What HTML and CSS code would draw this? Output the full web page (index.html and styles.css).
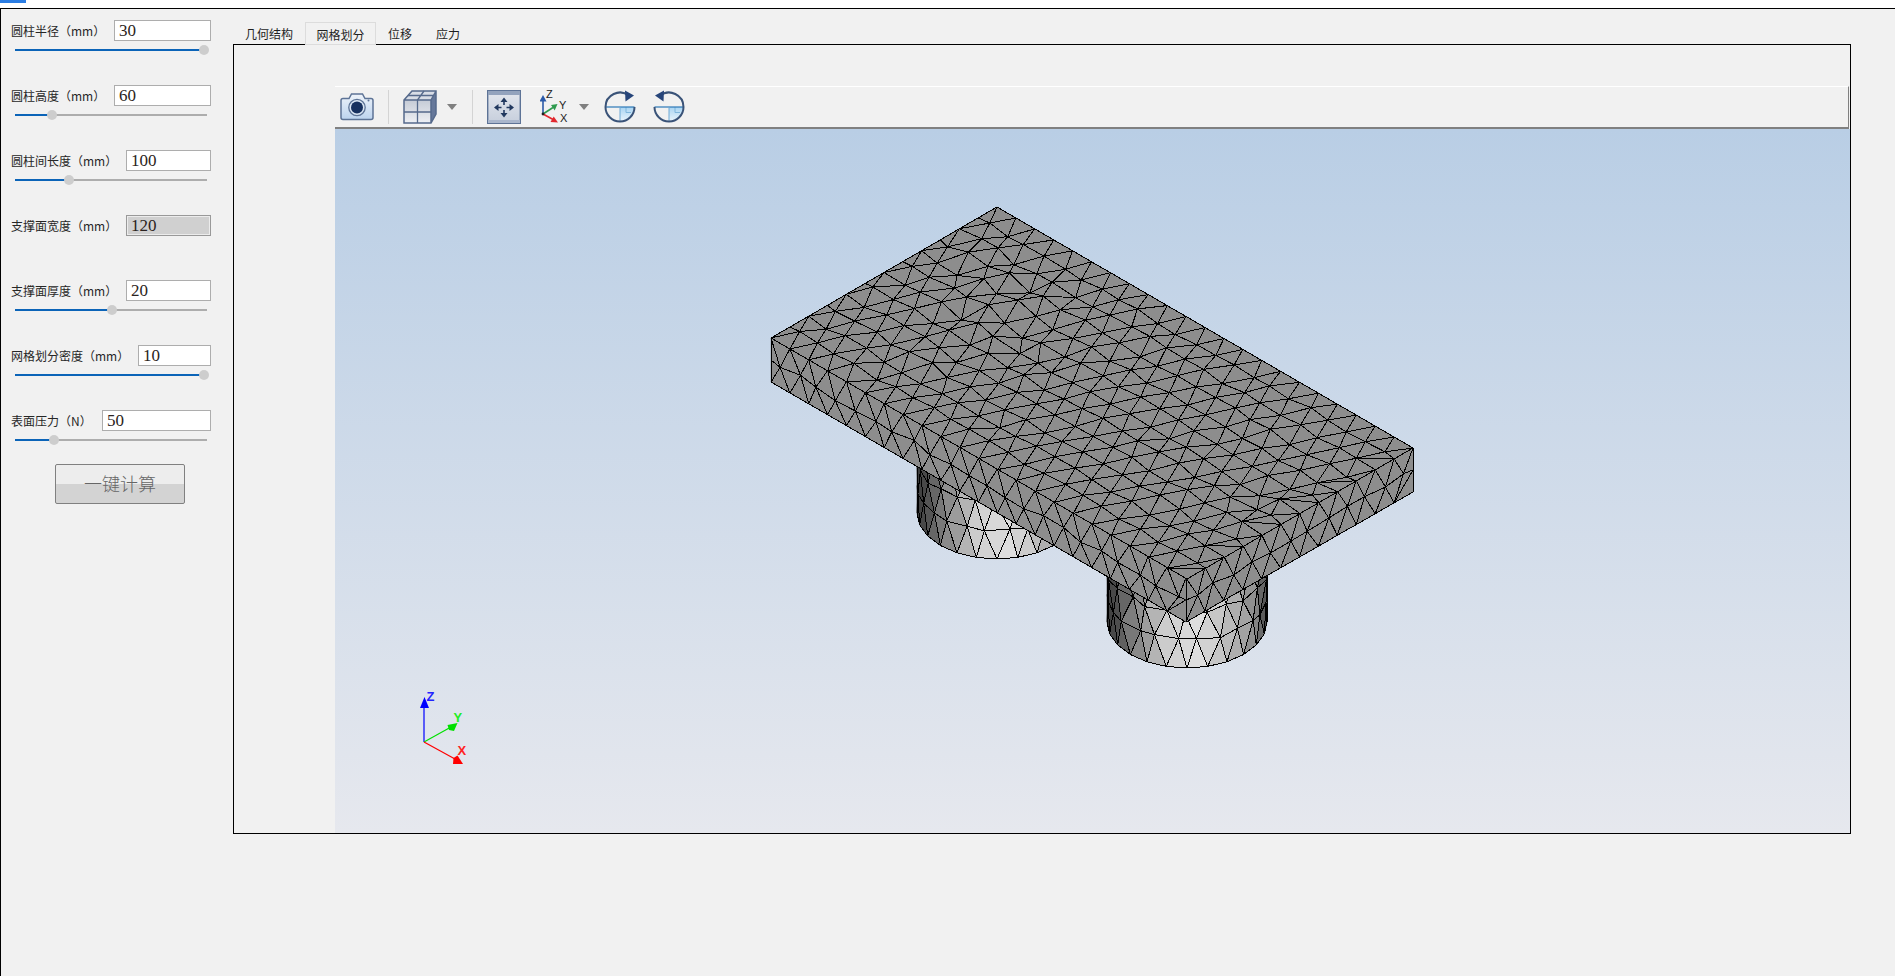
FILE: index.html
```html
<!DOCTYPE html>
<html lang="zh">
<head>
<meta charset="utf-8">
<title>圆柱支撑网格划分</title>
<link rel="stylesheet" href="styles.css">
</head>
<body>
<header class="titlebar"><span class="titlebar-tab"></span></header>
<div class="app">
  <aside class="sidebar">
    <div class="field">
      <div class="field-row"><label class="field-label">圆柱半径（mm）</label><input class="field-input w97" value="30"></div>
      <div class="slider"><div class="slider-fill" style="width:189px"></div><div class="slider-knob" style="left:189px"></div></div>
    </div>
    <div class="field">
      <div class="field-row"><label class="field-label">圆柱高度（mm）</label><input class="field-input w97" value="60"></div>
      <div class="slider"><div class="slider-fill" style="width:37px"></div><div class="slider-knob" style="left:37px"></div></div>
    </div>
    <div class="field">
      <div class="field-row"><label class="field-label">圆柱间长度（mm）</label><input class="field-input w85" value="100"></div>
      <div class="slider"><div class="slider-fill" style="width:54px"></div><div class="slider-knob" style="left:54px"></div></div>
    </div>
    <div class="field">
      <div class="field-row"><label class="field-label">支撑面宽度（mm）</label><input class="field-input field-input-off w85" value="120" readonly></div>
    </div>
    <div class="field">
      <div class="field-row"><label class="field-label">支撑面厚度（mm）</label><input class="field-input w85" value="20"></div>
      <div class="slider"><div class="slider-fill" style="width:97px"></div><div class="slider-knob" style="left:97px"></div></div>
    </div>
    <div class="field">
      <div class="field-row"><label class="field-label">网格划分密度（mm）</label><input class="field-input w73" value="10"></div>
      <div class="slider"><div class="slider-fill" style="width:189px"></div><div class="slider-knob" style="left:189px"></div></div>
    </div>
    <div class="field field-last">
      <div class="field-row"><label class="field-label">表面压力（N）</label><input class="field-input w109" value="50"></div>
      <div class="slider"><div class="slider-fill" style="width:39px"></div><div class="slider-knob" style="left:39px"></div></div>
    </div>
    <button class="calc-btn" type="button">一键计算</button>
  </aside>

  <main class="workspace">
    <nav class="tabs">
      <span class="tab">几何结构</span>
      <span class="tab tab-active">网格划分</span>
      <span class="tab">位移</span>
      <span class="tab">应力</span>
    </nav>
    <section class="pane">
      <div class="viewer">
        <div class="toolbar">
          <svg class="tool tool-camera" viewBox="0 0 34 30" width="34" height="30">
            <defs>
              <linearGradient id="camBody" x1="0" y1="0" x2="0" y2="1"><stop offset="0" stop-color="#eef3fa"/><stop offset="1" stop-color="#bcd3ee"/></linearGradient>
              <linearGradient id="cubeFace" x1="0" y1="0" x2="0" y2="1"><stop offset="0" stop-color="#c5cbd6"/><stop offset="1" stop-color="#eef0f4"/></linearGradient>
              <linearGradient id="fitFace" x1="0" y1="0" x2="0" y2="1"><stop offset="0" stop-color="#e3e7ee"/><stop offset="1" stop-color="#c6cedc"/></linearGradient>
              <linearGradient id="wedge" x1="0" y1="0" x2="0" y2="1"><stop offset="0" stop-color="#a9d4f2"/><stop offset="1" stop-color="#eaf5fc"/></linearGradient>
            </defs>
            <path d="M3 6.500h6l2.500-4.500h11l2.500 4.500h6q2 0 2 2v17q0 2-2 2h-28q-2 0-2-2v-17q0-2 2-2z" fill="url(#camBody)" stroke="#5d7396" stroke-width="1.500"/>
            <circle cx="17" cy="15.500" r="8.200" fill="#dbe6f4" stroke="#5d7396" stroke-width="1.300"/>
            <circle cx="17" cy="15.500" r="6" fill="#17305f"/>
            <circle cx="28.500" cy="8.500" r="1" fill="#5d7396"/>
          </svg>
          <span class="tool-sep sep-a"></span>
          <svg class="tool tool-cube" viewBox="0 0 34 34" width="34" height="34">
            <path d="M1 10H28V33H1z" fill="url(#cubeFace)"/>
            <path d="M1 10 9 1H33L28 10z" fill="#d8dde6"/>
            <path d="M28 10 33 1V24L28 33z" fill="#66789a"/>
            <path d="M1 10 9 1H33V24L28 33H1zM1 10H28V33M28 10 33 1" fill="none" stroke="#566a8c" stroke-width="1.500"/>
            <path d="M1 22H28M14.500 10V33M5 5.500H30.500M21 1 14.500 10" fill="none" stroke="#566a8c" stroke-width="1.300"/>
          </svg>
          <span class="tool-caret caret-a"></span>
          <span class="tool-sep sep-b"></span>
          <svg class="tool tool-fit" viewBox="0 0 34 34" width="34" height="34">
            <rect x=".7" y=".7" width="32.600" height="32.600" fill="url(#fitFace)" stroke="#5d7396" stroke-width="1.400"/>
            <rect x="1" y="1" width="32" height="4" fill="#93a3bd"/>
            <rect x="1" y="30" width="32" height="3" fill="#a9b6cc"/>
            <path d="M17 11.500v3.500M17 20v3.500M11 17.500h3.500M19.500 17.500H23" stroke="#22395f" stroke-width="1.600"/>
            <path d="M17 7.500l3.500 4.500h-7zM17 27.500l3.500-4.500h-7zM7 17.500l4.500-3.500v7zM27 17.500l-4.500-3.500v7z" fill="#22395f"/>
          </svg>
          <svg class="tool tool-axes" viewBox="0 0 32 36" width="32" height="36">
            <path d="M3 25V10" stroke="#2b5aa8" stroke-width="1.600"/>
            <path d="M3 6l3.500 6.500h-7z" fill="#2b5aa8"/>
            <path d="M3 25 13 18.500" stroke="#2f9a4e" stroke-width="1.600"/>
            <path d="M17.500 15l-2.800 6.500-3.700-5.500z" fill="#2f9a4e"/>
            <path d="M3 25 14 31" stroke="#e2282e" stroke-width="1.600"/>
            <path d="M18 33.500l-7.500-.5 3.200-5.500z" fill="#e2282e"/>
            <circle cx="3" cy="25" r="1.400" fill="#222"/>
            <text class="axes-text" x="6" y="9">Z</text>
            <text class="axes-text" x="19" y="20">Y</text>
            <text class="axes-text" x="20" y="33">X</text>
          </svg>
          <span class="tool-caret caret-b"></span>
          <svg class="tool tool-rot-a" viewBox="0 0 34 34" width="34" height="34">
            <path d="M17 17H31.500A14.500 14.500 0 0 1 17 31.500z" fill="url(#wedge)"/>
            <path d="M23 17v5.500h5" fill="none" stroke="#7fb6dc" stroke-width="1"/>
            <path d="M2.500 17H31.500" stroke="#2a78b8" stroke-width="1.200"/>
            <path d="M17 17v14.500" stroke="#6ea9d4" stroke-width="1"/>
            <path d="M26 5.700A14.500 14.500 0 0 0 2.500 17 14.500 14.500 0 0 0 31.500 17" fill="none" stroke="#3a5378" stroke-width="2"/>
            <path d="M22 .5 31 5.500 22.500 11.500z" fill="#27457a"/>
          </svg>
          <svg class="tool tool-rot-b" viewBox="0 0 34 34" width="34" height="34">
            <path d="M17 17H31.500A14.500 14.500 0 0 1 17 31.500z" fill="url(#wedge)"/>
            <path d="M23 17v5.500h5" fill="none" stroke="#7fb6dc" stroke-width="1"/>
            <path d="M2.500 17H31.500" stroke="#2a78b8" stroke-width="1.200"/>
            <path d="M17 17v14.500" stroke="#6ea9d4" stroke-width="1"/>
            <path d="M8 5.700A14.500 14.500 0 0 1 31.500 17 14.500 14.500 0 0 1 2.500 17" fill="none" stroke="#3a5378" stroke-width="2"/>
            <path d="M12 .5 3 5.500 11.500 11.500z" fill="#27457a"/>
          </svg>
        </div>
        <div class="scene">
          <svg class="scene-svg" id="scene" viewBox="335 129 1515 704" width="1515" height="704" xmlns="http://www.w3.org/2000/svg">
            <g id="mesh"></g>
            <g class="triad">
              <path d="M424 742V705" stroke="#0000ff" stroke-width="1.200"/>
              <path d="M424.500 697l4.500 11h-9z" fill="#0000ff"/>
              <path d="M424 742 451 727" stroke="#00e000" stroke-width="1.200"/>
              <path d="M457.500 723l-3.500 8-5-1-1.500-5z" fill="#00e000"/>
              <path d="M424 742 455 759" stroke="#ff0000" stroke-width="1.200"/>
              <path d="M463 764h-10l.500-6 4-2.500z" fill="#ff0000"/>
              <text class="triad-z" x="426.500" y="701">Z</text>
              <text class="triad-y" x="453.500" y="722">Y</text>
              <text class="triad-x" x="457.500" y="755">X</text>
            </g>
          </svg>
        </div>
      </div>
    </section>
  </main>
</div>
<script src="mesh.js"></script>
</body>
</html>
```
FILE: styles.css
```css
* { box-sizing: border-box; }
html, body { margin: 0; height: 976px; overflow: hidden; }
body {
  background: #f1f1f1;
  font-family: "Noto Sans CJK SC", "Liberation Sans", sans-serif;
  color: #222;
}
.titlebar {
  height: 9px;
  background: #fff;
  border-bottom: 1px solid #000;
}
.titlebar-tab {
  display: block;
  width: 26px;
  height: 3px;
  background: #2b7de3;
}
.app {
  display: flex;
  height: 967px;
  border-left: 1px solid #000;
}
.sidebar {
  width: 232px;
  flex: none;
  padding: 11px 0 0 10px;
}
.field { height: 65px; width: 200px; }
.field-last { height: 54px; }
.field-row {
  display: flex;
  align-items: center;
  justify-content: space-between;
  height: 21px;
}
.field-label {
  font-size: 12px;
  line-height: 21px;
  white-space: nowrap;
  color: #262626;
}
.field-input {
  height: 21px;
  padding: 0 0 0 4px;
  border: 1px solid #adadad;
  border-radius: 0;
  background: #fff;
  outline: 0;
  font-family: "Liberation Serif", serif;
  font-size: 17px;
  color: #2b2320;
}
.field-input-off {
  background: #d0d0d0;
  border-color: #999;
  box-shadow: inset 0 0 0 1px #ececec;
}
.w73 { width: 73px; }
.w85 { width: 85px; }
.w97 { width: 97px; }
.w109 { width: 109px; }
.slider {
  position: relative;
  width: 192px;
  height: 2px;
  margin: 8px 0 0 4px;
  background: #adadad;
}
.slider-fill { height: 2px; background: #0b64b8; }
.slider-knob {
  position: absolute;
  top: -4px;
  width: 10px;
  height: 10px;
  margin-left: -5px;
  border-radius: 50%;
  background: #cdcdcd;
}
.calc-btn {
  display: block;
  width: 130px;
  height: 40px;
  margin-left: 44px;
  padding: 0 0 2px;
  border: 1px solid #808080;
  border-radius: 2px;
  background: linear-gradient(#ededed 0, #ededed 50%, #d3d3d3 50%, #d3d3d3 100%);
  font-family: "Noto Sans CJK SC", sans-serif;
  font-size: 18px;
  font-weight: 300;
  color: #666;
}
.workspace { width: 1618px; flex: none; padding-top: 13px; }
.tabs {
  display: flex;
  height: 22px;
  position: relative;
  z-index: 1;
}
.tab {
  padding: 0 12px;
  font-size: 12px;
  line-height: 24px;
  color: #1f1f1f;
  white-space: nowrap;
}
.tab-active {
  width: 71px;
  height: 23px;
  padding: 0 10px;
  background: #f1f1f1;
  border: 1px solid #dcdcdc;
  line-height: 23px;
  text-align: center;
}
.pane {
  height: 790px;
  padding: 41px 0 0 101px;
  border: 1px solid #000;
}
.viewer { display: flex; flex-direction: column; height: 747px; }
.toolbar {
  display: flex;
  align-items: center;
  flex: none;
  height: 43px;
  margin-right: 1px;
  background: #f1f1f1;
  border-top: 1px solid #fff;
  border-right: 1px solid #808080;
  border-bottom: 2px solid #808080;
}
.tool { display: block; flex: none; }
.tool-camera { margin-left: 5px; }
.tool-sep { width: 1px; height: 34px; flex: none; background: #d4d4d4; }
.sep-a { margin-left: 14px; }
.tool-cube { margin-left: 14px; }
.tool-caret {
  flex: none;
  width: 0;
  height: 0;
  border-left: 5px solid transparent;
  border-right: 5px solid transparent;
  border-top: 6px solid #808080;
}
.caret-a { margin-left: 10px; }
.sep-b { margin-left: 15px; }
.tool-fit { margin-left: 14px; }
.tool-axes { margin-left: 19px; }
.caret-b { margin-left: 7px; }
.tool-rot-a { margin-left: 14px; }
.tool-rot-b { margin-left: 15px; }
.axes-text { font: 11px "Liberation Sans", sans-serif; fill: #1c1c1c; }
.scene {
  flex: 1;
  position: relative;
  background: linear-gradient(#b9cee5, #e6e8ee);
}
.scene-svg { position: absolute; left: 0; top: 0; display: block; }
.triad text { font: bold 13px "Liberation Sans", sans-serif; }
.triad-z { fill: #2222ff; }
.triad-y { fill: #22ee22; }
.triad-x { fill: #ff2222; }
```
FILE: mesh.js
```js
(function () {
  var NS = 'http://www.w3.org/2000/svg';
  var root = document.getElementById('mesh');
  var seed = 20240611;
  function rnd() {
    seed = (seed * 1664525 + 1013904223) >>> 0;
    return seed / 4294967296;
  }
  function rows(nodeAt, nu, nv, jitter) {
    var out = [];
    for (var j = 0; j <= nv; j++) {
      var ss = [0];
      var odd = j % 2 === 1;
      for (var i = odd ? 0.5 : 1; i < nu; i++) ss.push(i);
      ss.push(nu);
      out.push(ss.map(function (s) {
        var p = nodeAt(s, j);
        if (j > 0 && j < nv && s > 0 && s < nu) {
          var k = jitter(p);
          p = [p[0] + (rnd() - 0.5) * k, p[1] + (rnd() - 0.5) * k];
        }
        return { s: s, p: p };
      }));
    }
    return out;
  }
  function triangles(rs) {
    var tris = [];
    for (var j = 0; j < rs.length - 1; j++) {
      var a = rs[j], b = rs[j + 1], i = 0, k = 0;
      while (i < a.length - 1 || k < b.length - 1) {
        var useA = k >= b.length - 1 || (i < a.length - 1 && a[i + 1].s <= b[k + 1].s);
        if (useA) { tris.push([a[i].p, a[i + 1].p, b[k].p]); i++; }
        else { tris.push([a[i].p, b[k].p, b[k + 1].p]); k++; }
      }
    }
    return tris;
  }
  function add(tris, fillOf) {
    var byFill = {};
    var edges = '';
    tris.forEach(function (t) {
      var d = 'M' + t.map(function (p) { return p[0].toFixed(1) + ' ' + p[1].toFixed(1); }).join('L') + 'Z';
      var f = fillOf(t);
      byFill[f] = (byFill[f] || '') + d;
      edges += d;
    });
    Object.keys(byFill).forEach(function (f) {
      var e = document.createElementNS(NS, 'path');
      e.setAttribute('d', byFill[f]);
      e.setAttribute('fill', f);
      e.setAttribute('stroke', f);
      e.setAttribute('stroke-width', '0.6');
      root.appendChild(e);
    });
    var l = document.createElementNS(NS, 'path');
    l.setAttribute('d', edges);
    l.setAttribute('fill', 'none');
    l.setAttribute('stroke', '#000');
    l.setAttribute('stroke-width', '1');
    l.setAttribute('stroke-linejoin', 'bevel');
    l.setAttribute('shape-rendering', 'crispEdges');
    root.appendChild(l);
  }
  function face(a, b, c, nu, nv, jitter) {
    var ux = (b[0] - a[0]) / nu, uy = (b[1] - a[1]) / nu;
    var vx = (c[0] - a[0]) / nv, vy = (c[1] - a[1]) / nv;
    var rs = rows(function (s, j) {
      return [a[0] + ux * s + vx * j, a[1] + uy * s + vy * j];
    }, nu, nv, jitter);
    add(triangles(rs), function () { return '#8d8d8d'; });
  }
  var shades = [[-1, 60], [-0.88, 78], [-0.72, 118], [-0.5, 158], [-0.25, 205], [0.15, 222], [0.45, 195], [0.72, 160], [0.88, 130], [1, 62]];
  function shade(t) {
    var v = shades[0][1];
    for (var i = 0; i < shades.length - 1; i++) {
      if (t >= shades[i][0] && t <= shades[i + 1][0]) {
        var f = (t - shades[i][0]) / (shades[i + 1][0] - shades[i][0]);
        v = shades[i][1] + f * (shades[i + 1][1] - shades[i][1]);
      }
    }
    v = Math.round(v / 6) * 6;
    var h = Math.min(255, v).toString(16);
    if (h.length < 2) h = '0' + h;
    return '#' + h + h + h;
  }
  function cylinder(cx, cy, rx, ry, h) {
    var nt = 12, nz = 4, dz = h / nz;
    var rs = rows(function (s, j) {
      var th = Math.PI - Math.PI * s / nt;
      return [cx + rx * Math.cos(th), cy + ry * Math.sin(th) - dz * j];
    }, nt, nz, function () { return 6; });
    add(triangles(rs), function (t) {
      var mx = (t[0][0] + t[1][0] + t[2][0]) / 3;
      return shade((mx - cx) / rx);
    });
  }
  function near(p, x, y, r) {
    var dx = p[0] - x, dy = p[1] - y;
    return Math.exp(-(dx * dx + dy * dy) / (r * r));
  }
  function topJitter(p) {
    return 4 + 9 * near(p, 1000, 310, 70) + 6 * near(p, 1270, 505, 60) + 4 * near(p, 850, 380, 70);
  }
  cylinder(997, 513, 80, 46, 110);
  cylinder(1187, 622, 80, 46, 110);
  face([771, 338], [1186, 578], [771, 382], 22, 2, function () { return 5; });
  face([1186, 578], [1413, 448], [1186, 622], 12, 2, function () { return 5; });
  face([997, 207], [1413, 448], [771, 338], 22, 12, topJitter);
})();
```
